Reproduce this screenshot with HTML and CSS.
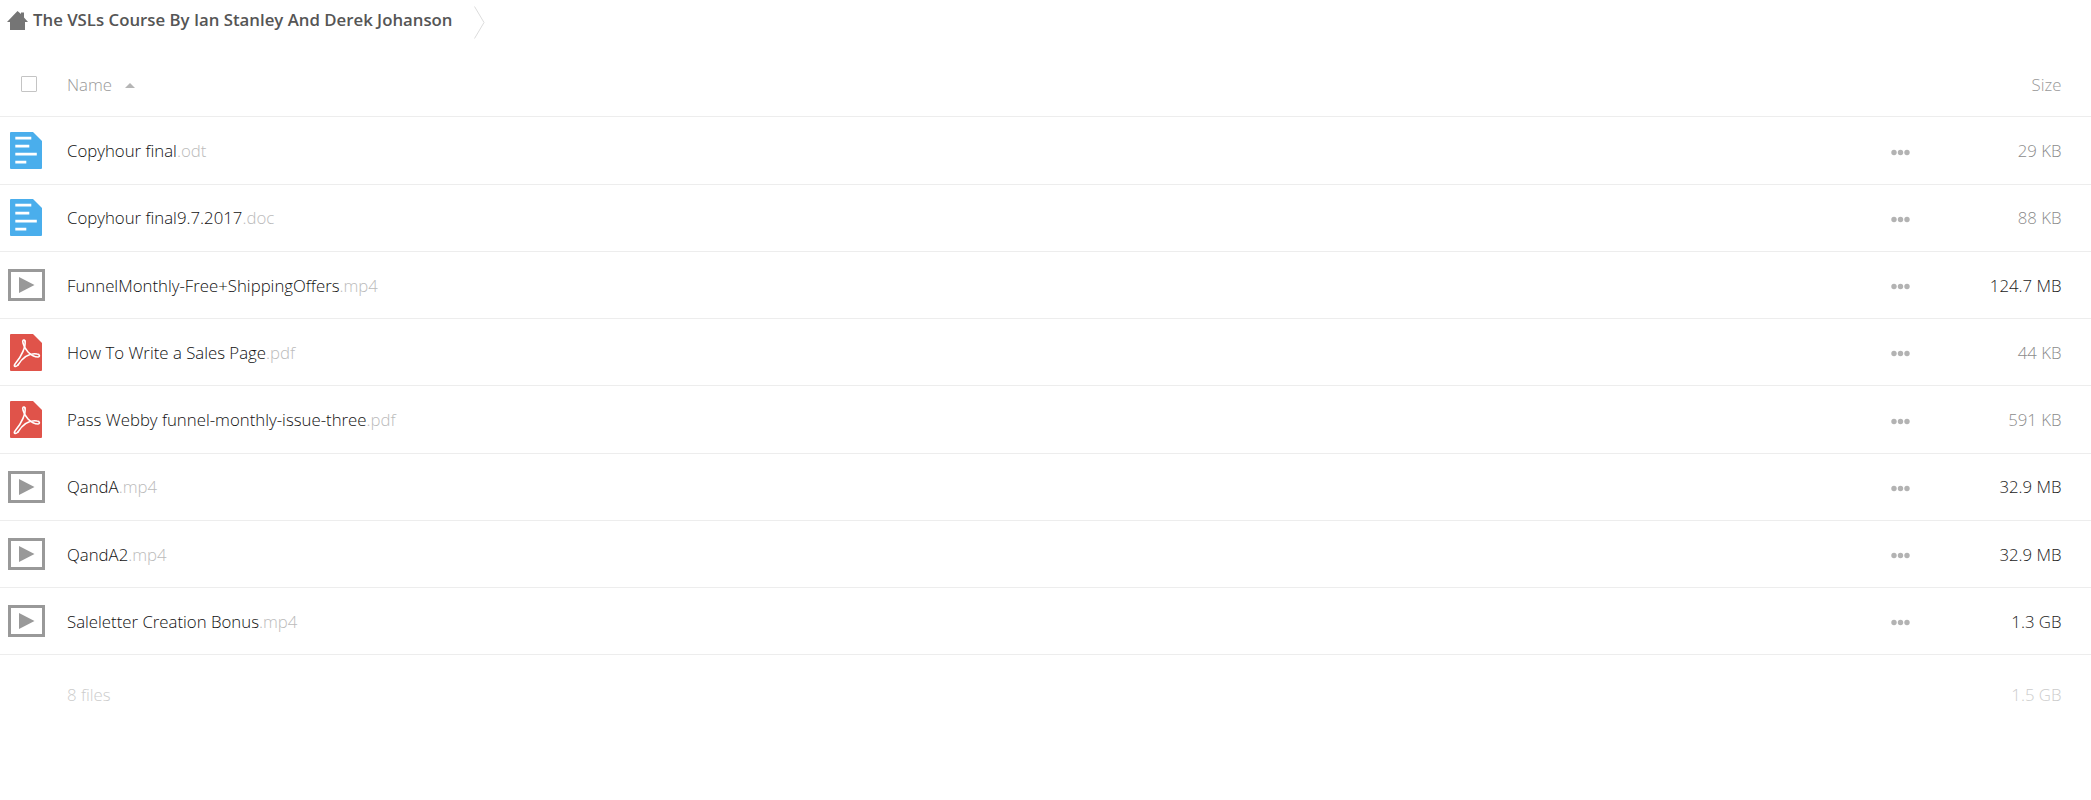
FILE: index.html
```html
<!DOCTYPE html>
<html lang="en">
<head>
<meta charset="utf-8">
<title>The VSLs Course By Ian Stanley And Derek Johanson</title>
<link rel="stylesheet" href="styles.css">
</head>
<body>
<svg class="defs" width="0" height="0" aria-hidden="true">
  <symbol id="i-doc" viewBox="0 0 32 37">
    <path d="M0 1a1 1 0 0 1 1-1h22l9 9v27a1 1 0 0 1-1 1H1a1 1 0 0 1-1-1z" fill="#4aaeec"/>
    <path d="M5.300 4.800h16v2.800h-16zM5.300 12.800h14v2.800h-14zM5.300 20.800h21.500v2.800h-21.500zM5.300 28.800h11v2.800h-11z" fill="#fff"/>
  </symbol>
  <symbol id="i-pdf" viewBox="0 0 32 37">
    <path d="M0 1a1 1 0 0 1 1-1h22l9 9v27a1 1 0 0 1-1 1H1a1 1 0 0 1-1-1z" fill="#e0534a"/>
    <path d="M15 7C16 12 12 22 5 30C3 33 6 33 8 31" fill="none" stroke="#fff" stroke-width="1.600" stroke-linecap="round"/>
    <path d="M15 7C14 5 12 6 13 9C14 13 15 15 18 18C21 21 25 23 28 23C30 23 30 20 27 20C20 19 13 23 8 31" fill="none" stroke="#fff" stroke-width="1.600" stroke-linecap="round"/>
  </symbol>
  <symbol id="i-video" viewBox="0 0 37 32">
    <rect x="1.500" y="1.500" width="34" height="29" fill="none" stroke="#999" stroke-width="3"/>
    <path d="M11 8l15.500 8l-15.500 8z" fill="#999"/>
  </symbol>
  <symbol id="i-more" viewBox="0 0 19 7">
    <circle cx="3" cy="3.500" r="2.700" fill="#b3b3b3"/>
    <circle cx="9.500" cy="3.500" r="2.700" fill="#b3b3b3"/>
    <circle cx="16" cy="3.500" r="2.700" fill="#b3b3b3"/>
  </symbol>
</svg>

<nav class="crumbs">
  <svg class="home" viewBox="0 0 21 19" aria-hidden="true">
    <path d="M10.500 0L14 3V1.500h3v5l4 4.500h-3v8H3v-8H0z" fill="#757575"/>
  </svg>
  <span class="crumb-title">The VSLs Course By Ian Stanley And Derek Johanson</span>
  <svg class="crumb-sep" viewBox="0 0 11 33" aria-hidden="true">
    <path d="M.5.500L10 16.500L.5 32.500" fill="none" stroke="#dcdcdc"/>
  </svg>
</nav>

<main class="files">
  <div class="row head">
    <span class="cell-icon"><span class="check"></span></span>
    <span class="name label">Name<span class="sort"></span></span>
    <span class="size label">Size</span>
  </div>

  <div class="row">
    <span class="cell-icon"><svg class="doc"><use href="#i-doc"/></svg></span>
    <span class="name">Copyhour final<span class="ext">.odt</span></span>
    <svg class="more"><use href="#i-more"/></svg>
    <span class="size s1">29 KB</span>
  </div>
  <div class="row">
    <span class="cell-icon"><svg class="doc"><use href="#i-doc"/></svg></span>
    <span class="name">Copyhour final9.7.2017<span class="ext">.doc</span></span>
    <svg class="more"><use href="#i-more"/></svg>
    <span class="size s1">88 KB</span>
  </div>
  <div class="row">
    <span class="cell-icon"><svg class="video"><use href="#i-video"/></svg></span>
    <span class="name">FunnelMonthly-Free+ShippingOffers<span class="ext">.mp4</span></span>
    <svg class="more"><use href="#i-more"/></svg>
    <span class="size s3">124.7 MB</span>
  </div>
  <div class="row">
    <span class="cell-icon"><svg class="doc"><use href="#i-pdf"/></svg></span>
    <span class="name">How To Write a Sales Page<span class="ext">.pdf</span></span>
    <svg class="more"><use href="#i-more"/></svg>
    <span class="size s1">44 KB</span>
  </div>
  <div class="row">
    <span class="cell-icon"><svg class="doc"><use href="#i-pdf"/></svg></span>
    <span class="name">Pass Webby funnel-monthly-issue-three<span class="ext">.pdf</span></span>
    <svg class="more"><use href="#i-more"/></svg>
    <span class="size s1">591 KB</span>
  </div>
  <div class="row">
    <span class="cell-icon"><svg class="video"><use href="#i-video"/></svg></span>
    <span class="name">QandA<span class="ext">.mp4</span></span>
    <svg class="more"><use href="#i-more"/></svg>
    <span class="size s3">32.9 MB</span>
  </div>
  <div class="row">
    <span class="cell-icon"><svg class="video"><use href="#i-video"/></svg></span>
    <span class="name">QandA2<span class="ext">.mp4</span></span>
    <svg class="more"><use href="#i-more"/></svg>
    <span class="size s3">32.9 MB</span>
  </div>
  <div class="row">
    <span class="cell-icon"><svg class="video"><use href="#i-video"/></svg></span>
    <span class="name">Saleletter Creation Bonus<span class="ext">.mp4</span></span>
    <svg class="more"><use href="#i-more"/></svg>
    <span class="size s3">1.3 GB</span>
  </div>

  <div class="row foot">
    <span class="cell-icon"></span>
    <span class="name">8 files</span>
    <span class="size">1.5 GB</span>
  </div>
</main>
</body>
</html>
```

FILE: styles.css
```css
html, body {
  margin: 0;
  padding: 0;
  background: #fff;
}

body {
  font-family: "Open Sans", sans-serif;
  font-weight: 300;
  font-size: 16.8px;
  color: #111;
}

.defs {
  display: block;
  height: 0;
}

.crumbs {
  display: flex;
  align-items: center;
  height: 40px;
  padding-left: 7px;
}

.home {
  width: 21px;
  height: 19px;
}

.crumb-title {
  margin-left: 5px;
  margin-bottom: 2px;
  font-weight: 600;
  color: #555;
}

.crumb-sep {
  width: 11px;
  height: 33px;
  margin-left: 21px;
  margin-top: 4px;
}

.files {
  display: flex;
  flex-direction: column;
}

.row {
  display: flex;
  align-items: center;
  height: 67.25px;
  box-sizing: border-box;
  border-bottom: 1px solid #ededed;
}

.head {
  height: 77.4px;
  padding-top: 12px;
}

.foot {
  height: 78px;
  border-bottom: 0;
}

.cell-icon {
  display: flex;
  justify-content: center;
  align-items: center;
  flex: none;
  width: 52px;
  margin-right: 15px;
}

.doc {
  display: block;
  width: 32px;
  height: 37px;
}

.video {
  display: block;
  width: 37px;
  height: 32px;
}

.check {
  display: block;
  box-sizing: border-box;
  width: 16px;
  height: 16px;
  margin-left: 5px;
  border: 1px solid #c4c4c4;
  border-radius: 1px;
}

.name {
  flex: 1;
  min-width: 0;
}

.ext {
  color: #bbb;
}

.label {
  color: #999;
}

.sort {
  display: inline-block;
  width: 0;
  height: 0;
  margin-left: 13px;
  vertical-align: 3px;
  border-left: 5px solid transparent;
  border-right: 5px solid transparent;
  border-bottom: 5px solid #b5b5b5;
}

.more {
  flex: none;
  width: 19px;
  height: 7px;
  margin-right: 1.5px;
  margin-top: 3px;
}

.size {
  flex: none;
  width: 150px;
  margin-right: 29.5px;
  text-align: right;
}

.s1 { color: #8c8c8c; }
.s3 { color: #222; }

.foot .name,
.foot .size {
  color: #ccc;
}
```
